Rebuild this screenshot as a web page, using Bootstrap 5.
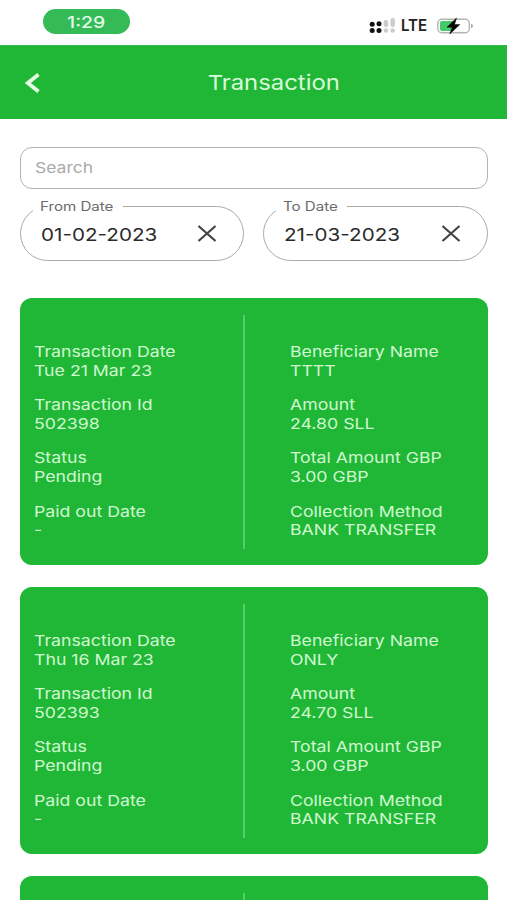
<!DOCTYPE html>
<html lang="en">
<head>
<meta charset="utf-8">
<meta name="viewport" content="width=device-width, initial-scale=1">
<title>Transaction</title>
<link href="https://cdn.jsdelivr.net/npm/bootstrap@5.3.0/dist/css/bootstrap.min.css" rel="stylesheet">
<style>
  body { font-family: Inter, "Liberation Sans", sans-serif; background: #fff; }
  .screen { height: 900px; }
  /* wide lettering: every text run is stretched from its left edge */
  .wide { display: inline-block; white-space: nowrap; transform: scaleX(1.18); transform-origin: 0 50%; }
  .status { height: 45px; padding: 9px 33px 0 43px; }
  .clock { width: 87px; height: 25px; background: #35ba58; color: #e3fbe6; font-size: 16.5px; font-weight: 500; line-height: 26px; }
  .clock .wide, .bar .wide { transform-origin: 50% 50%; }
  .indicators { height: 34px; }
  .lte { color: #222; font-size: 15.3px; font-weight: 600; width: 28px; line-height: 20px; }
  .lte .wide { transform: scaleX(.98); }
  .bar { height: 74px; background: #20b736; color: #d8f9da; border-top: 1px solid #36b64b; }
  .bar h1 { font-size: 20.5px; font-weight: 400; padding-left: 37px; padding-top: 2px; }
  .bar .wide { transform: scaleX(1.165); }
  .back { width: 52px; padding-left: 24px; }
  .page { padding: 28px 19px 0 20px; }
  .search { height: 42px; border: 1.5px solid #b3b3b3; border-radius: 12px; padding-left: 13.5px; color: #aaa; font-size: 15px; }
  .search .wide { transform: scaleX(1.165); }
  .dates { margin-top: 17px; gap: 19px; }
  .date { height: 55px; border: 1.5px solid #aaa; border-radius: 28px; padding: 0 26px 0 20px; color: #2b2b2b; font-size: 17.5px; }
  .date > .wide { padding-top: 3px; }
  .from { width: 224px; }
  .to { width: 225px; }
  .date label { top: -8px; left: 12px; height: 16px; line-height: 16px; background: #fff; color: #6b6b6b; font-size: 12.8px; padding-left: 7px; }
  .from label { width: 90px; }
  .to label { width: 71px; }
  .cards { margin-top: 37px; gap: 22px; }
  .tx { height: 267px; background: #20b736; border-radius: 12px; color: #d0f8d0; font-size: 15px; line-height: 18.6px; padding: 17px 0 16px 13.5px; }
  .tx .left { width: 209.5px; }
  .tx .right { padding-left: 44.5px; }
  .tx .left, .tx .right { padding-top: 28px; }
  .tx .pair { height: 53.2px; }
  .rule { width: 2px; background: #57cd70; }
</style>
<script src="https://cdn.jsdelivr.net/npm/bootstrap@5.3.0/dist/js/bootstrap.bundle.min.js"></script>
</head>
<body>
<div class="screen overflow-hidden">
<div class="status d-flex justify-content-between align-items-start">
  <div class="clock rounded-pill text-center"><span class="wide">1:29</span></div>
  <div class="indicators d-flex align-items-center">
    <svg width="28" height="16" viewBox="0 0 28 16">
      <g fill="#111"><circle cx="3.2" cy="6.3" r="2.5"/><circle cx="10" cy="5.8" r="2.5"/><circle cx="3.2" cy="12.5" r="2.5"/><circle cx="10" cy="12.5" r="2.5"/></g>
      <g fill="#ccc"><rect x="14.6" y="2" width="4.6" height="7" rx="2"/><circle cx="16.9" cy="12.5" r="2.2"/><rect x="21.5" y="0" width="4.4" height="9" rx="2"/><circle cx="23.7" cy="12.5" r="2.2"/></g>
    </svg>
    <span class="lte ms-1"><span class="wide">LTE</span></span>
    <svg class="ms-2" width="37" height="18" viewBox="0 0 37 18">
      <rect x=".8" y="2.2" width="31.5" height="13.6" rx="4" fill="#fff" stroke="#b2b8b2" stroke-width="1.4"/>
      <path d="M5 4h12v10H5a2 2 0 0 1-2-2V6a2 2 0 0 1 2-2z" fill="#43cb69"/>
      <path d="M34 6.8v4.4q2-.5 2-2.2t-2-2.2z" fill="#aaa"/>
      <path d="M19.5 1 10 10.2h5.3L12.8 17 22.8 7.6h-5.3z" fill="#050505" stroke="#050505" stroke-width=".5"/>
    </svg>
  </div>
</div>
<header class="bar d-flex align-items-center">
  <div class="back"><svg class="d-block" width="18" height="22" viewBox="0 0 18 22"><path d="M14.5 2.5 3.8 11l10.7 8.5" fill="none" stroke="#e4fce5" stroke-width="3.8"/></svg></div>
  <h1 class="flex-grow-1 text-center mb-0 pe-5"><span class="wide">Transaction</span></h1>
</header>
<main class="page">
  <div class="search d-flex align-items-center"><span class="wide">Search</span></div>
  <div class="dates d-flex">
    <div class="date from position-relative d-flex align-items-center justify-content-between">
      <label class="position-absolute"><span class="wide">From Date</span></label>
      <span class="wide">01-02-2023</span>
      <svg width="20" height="18" viewBox="0 0 20 18"><path d="M1.5 1l17 15m0-15l-17 15" stroke="#444" stroke-width="2.2"/></svg>
    </div>
    <div class="date to position-relative d-flex align-items-center justify-content-between">
      <label class="position-absolute"><span class="wide">To Date</span></label>
      <span class="wide">21-03-2023</span>
      <svg width="20" height="18" viewBox="0 0 20 18"><path d="M1.5 1l17 15m0-15l-17 15" stroke="#444" stroke-width="2.2"/></svg>
    </div>
  </div>
  <div class="cards d-flex flex-column">
    <article class="tx d-flex">
      <div class="left">
        <div class="pair"><span class="wide">Transaction Date<br>Tue 21 Mar 23</span></div>
        <div class="pair"><span class="wide">Transaction Id<br>502398</span></div>
        <div class="pair"><span class="wide">Status<br>Pending</span></div>
        <div class="pair"><span class="wide">Paid out Date<br>-</span></div>
      </div>
      <div class="rule"></div>
      <div class="right">
        <div class="pair"><span class="wide">Beneficiary Name<br>TTTT</span></div>
        <div class="pair"><span class="wide">Amount<br>24.80 SLL</span></div>
        <div class="pair"><span class="wide">Total Amount GBP<br>3.00 GBP</span></div>
        <div class="pair"><span class="wide">Collection Method<br>BANK TRANSFER</span></div>
      </div>
    </article>
    <article class="tx d-flex">
      <div class="left">
        <div class="pair"><span class="wide">Transaction Date<br>Thu 16 Mar 23</span></div>
        <div class="pair"><span class="wide">Transaction Id<br>502393</span></div>
        <div class="pair"><span class="wide">Status<br>Pending</span></div>
        <div class="pair"><span class="wide">Paid out Date<br>-</span></div>
      </div>
      <div class="rule"></div>
      <div class="right">
        <div class="pair"><span class="wide">Beneficiary Name<br>ONLY</span></div>
        <div class="pair"><span class="wide">Amount<br>24.70 SLL</span></div>
        <div class="pair"><span class="wide">Total Amount GBP<br>3.00 GBP</span></div>
        <div class="pair"><span class="wide">Collection Method<br>BANK TRANSFER</span></div>
      </div>
    </article>
    <article class="tx d-flex">
      <div class="left"></div>
      <div class="rule"></div>
    </article>
  </div>
</main>
</div>
</body>
</html>
